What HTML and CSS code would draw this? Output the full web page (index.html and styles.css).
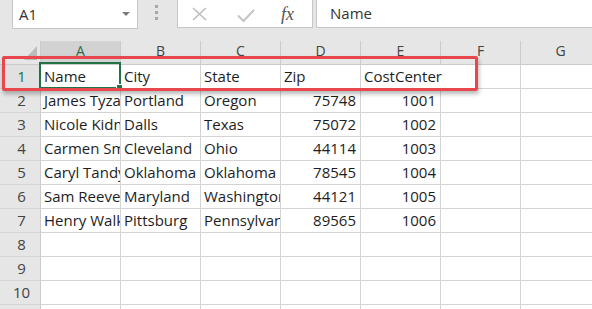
FILE: index.html
```html
<!DOCTYPE html>
<html>
<head>
<meta charset="utf-8">
<link rel="stylesheet" href="styles.css">
</head>
<body>
<div class="app">
  <div class="topbar">
    <div class="namebox"><span class="nb-text">A1</span><i class="caret"></i></div>
    <svg class="grip" width="4" height="24" viewBox="0 0 4 24"><rect x="0" y="5" width="3" height="3" fill="#a8a8a8"/><rect x="0" y="11" width="3" height="3" fill="#a8a8a8"/><rect x="0" y="17" width="3" height="3" fill="#a8a8a8"/></svg>
    <div class="fbtns">
      <svg width="134" height="27" viewBox="0 0 134 27">
        <path d="M15 8 L28 20 M28 8 L15 20" stroke="#bdbdbd" stroke-width="1.6" fill="none"/>
        <path d="M60 15.5 L65.5 21 L76 10" stroke="#c4c4c4" stroke-width="2" fill="none"/>
        <text x="103" y="20" class="fx">fx</text>
      </svg>
    </div>
    <div class="fbar">Name</div>
  </div>
  <div class="sheet">
    <div class="grid">
      <div class="h corner"><svg width="13" height="14" viewBox="0 0 13 14"><polygon points="13,0 13,14 0,14" fill="#bcbcbc"/></svg></div>
      <div class="h sel">A</div><div class="h">B</div><div class="h">C</div><div class="h">D</div><div class="h">E</div><div class="h">F</div><div class="h">G</div>

      <div class="r rsel">1</div>
      <div class="c active">Name<span class="cursor"><i class="handle"></i></span></div><div class="c">City</div><div class="c">State</div><div class="c">Zip</div><div class="c over">CostCenter</div><div class="c"></div><div class="c"></div>

      <div class="r">2</div>
      <div class="c">James Tyzack</div><div class="c">Portland</div><div class="c">Oregon</div><div class="c n">75748</div><div class="c n">1001</div><div class="c"></div><div class="c"></div>

      <div class="r">3</div>
      <div class="c">Nicole Kidman</div><div class="c">Dalls</div><div class="c">Texas</div><div class="c n">75072</div><div class="c n">1002</div><div class="c"></div><div class="c"></div>

      <div class="r">4</div>
      <div class="c">Carmen Smith</div><div class="c">Cleveland</div><div class="c">Ohio</div><div class="c n">44114</div><div class="c n">1003</div><div class="c"></div><div class="c"></div>

      <div class="r">5</div>
      <div class="c">Caryl Tandy</div><div class="c">Oklahoma</div><div class="c">Oklahoma</div><div class="c n">78545</div><div class="c n">1004</div><div class="c"></div><div class="c"></div>

      <div class="r">6</div>
      <div class="c">Sam Reeves</div><div class="c">Maryland</div><div class="c">Washington</div><div class="c n">44121</div><div class="c n">1005</div><div class="c"></div><div class="c"></div>

      <div class="r">7</div>
      <div class="c">Henry Walker</div><div class="c">Pittsburg</div><div class="c">Pennsylvania</div><div class="c n">89565</div><div class="c n">1006</div><div class="c"></div><div class="c"></div>

      <div class="r">8</div>
      <div class="c"></div><div class="c"></div><div class="c"></div><div class="c"></div><div class="c"></div><div class="c"></div><div class="c"></div>

      <div class="r">9</div>
      <div class="c"></div><div class="c"></div><div class="c"></div><div class="c"></div><div class="c"></div><div class="c"></div><div class="c"></div>

      <div class="r">10</div>
      <div class="c"></div><div class="c"></div><div class="c"></div><div class="c"></div><div class="c"></div><div class="c"></div><div class="c"></div>

      <div class="r">11</div>
      <div class="c"></div><div class="c"></div><div class="c"></div><div class="c"></div><div class="c"></div><div class="c"></div><div class="c"></div>
    </div>
    <div class="callout"></div>
  </div>
</div>
</body>
</html>
```

FILE: styles.css
```css
html, body {
  margin: 0;
  padding: 0;
}
body {
  width: 592px;
  height: 309px;
  overflow: hidden;
  background: #e6e6e6;
  font-family: "Open Sans", "DejaVu Sans", sans-serif;
  color: #1e1e1e;
}
.app {
  width: 592px;
  height: 309px;
  overflow: hidden;
}
.topbar {
  display: flex;
  align-items: flex-start;
  height: 41px;
}
.namebox {
  margin-left: 12px;
  width: 126px;
  height: 29px;
  box-sizing: border-box;
  background: #fff;
  border: 1px solid #c6c6c6;
  border-top: none;
  display: flex;
  align-items: center;
  padding-left: 6px;
}
.nb-text {
  font-size: 15px;
  line-height: 28px;
  color: #333;
}
.caret {
  margin-left: auto;
  margin-right: 7px;
  width: 0;
  height: 0;
  border-left: 4px solid transparent;
  border-right: 4px solid transparent;
  border-top: 4px solid #7a7a7a;
}
.grip {
  margin-left: 17px;
  margin-right: 18px;
  display: block;
}
.fbtns {
  width: 136px;
  height: 28px;
  box-sizing: border-box;
  background: #fff;
  border: 1px solid #c6c6c6;
  border-top: none;
}
.fbtns svg {
  display: block;
}
.fx {
  font-family: "Liberation Serif", "DejaVu Serif", serif;
  font-style: italic;
  font-size: 18px;
  fill: #555;
}
.fbar {
  margin-left: 3px;
  flex: 1;
  height: 28px;
  box-sizing: border-box;
  background: #fff;
  border-left: 1px solid #c6c6c6;
  border-bottom: 1px solid #c6c6c6;
  padding-left: 13px;
  font-size: 15px;
  line-height: 27px;
  color: #333;
}
.sheet {
  position: relative;
  width: 601px;
}
.grid {
  display: grid;
  grid-template-columns: 41px repeat(7, 80px);
  grid-auto-rows: 24px;
}
.h {
  box-sizing: border-box;
  background: #e6e6e6;
  border-right: 1px solid #cbcbcb;
  border-bottom: 1px solid #cbcbcb;
  text-align: center;
  font-size: 14px;
  line-height: 19px;
  color: #444;
}
.h.sel {
  background: #d2d2d2;
  color: #2e6b48;
}
.corner {
  display: flex;
  align-items: flex-end;
  justify-content: flex-end;
  padding: 0 3px 4px 0;
}
.corner svg {
  display: block;
}
.r {
  box-sizing: border-box;
  background: #e6e6e6;
  border-right: 1px solid #cbcbcb;
  border-bottom: 1px solid #d4d4d4;
  text-align: center;
  padding-left: 3px;
  font-size: 15px;
  line-height: 23px;
  color: #444;
}
.r.rsel {
  color: #217346;
  background: #e1e1e1;
}
.c {
  box-sizing: border-box;
  background: #fff;
  border-right: 1px solid #d4d4d4;
  border-bottom: 1px solid #d4d4d4;
  padding: 0 0 0 3px;
  font-size: 15px;
  line-height: 23px;
  white-space: nowrap;
  overflow: hidden;
  text-overflow: clip;
  color: #1e1e1e;
}
.c.n {
  text-align: right;
  padding-right: 4px;
}
.c.over {
  overflow: visible;
  border-right-color: #fff;
  position: relative;
  z-index: 1;
}
.c.active {
  position: relative;
  overflow: visible;
}
.cursor {
  position: absolute;
  left: -2px;
  top: -3px;
  width: 82px;
  height: 27px;
  box-sizing: border-box;
  border: 2px solid #217346;
  z-index: 2;
}
.handle {
  position: absolute;
  right: -4px;
  bottom: -4px;
  width: 5px;
  height: 5px;
  background: #217346;
  border: 1px solid #fff;
}
.callout {
  position: absolute;
  left: 2px;
  top: 15px;
  width: 476px;
  height: 35px;
  box-sizing: border-box;
  border: 3px solid #e8474d;
  border-radius: 2px;
  box-shadow: 1px 3px 4px rgba(0, 0, 0, 0.28);
  z-index: 3;
}
```
